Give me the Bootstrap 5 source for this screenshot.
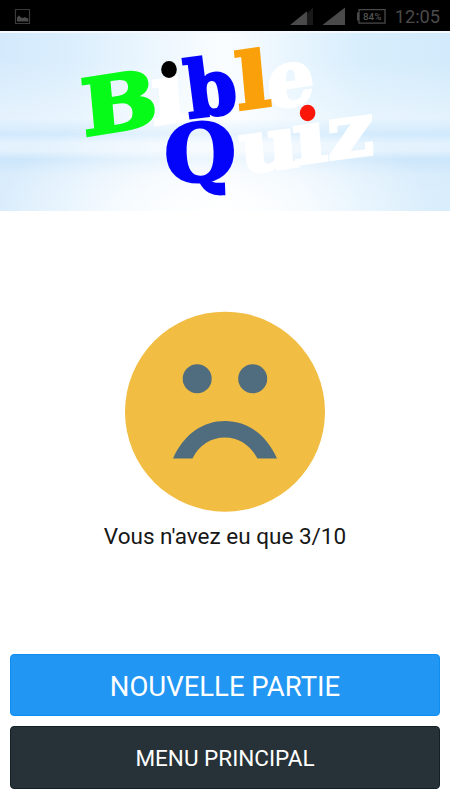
<!DOCTYPE html>
<html lang="fr">
<head>
<meta charset="utf-8">
<meta name="viewport" content="width=device-width, initial-scale=1">
<title>Bible Quiz</title>
<link rel="stylesheet" href="https://cdn.jsdelivr.net/npm/bootstrap@5.3.0/dist/css/bootstrap.min.css">
<style>
body{font-family:Roboto,"Liberation Sans",sans-serif;color:#171717}
.status-bar{height:31px;background:#000;color:#4a4a4a;padding:2px 10px 0 14px}
.clock{font-size:18.2px;line-height:28px}
.banner{height:180px;border-top:2px solid #f4f8ff;
background:
 radial-gradient(ellipse 215px 110px at 48% 100%,rgba(255,255,255,.9) 0,rgba(255,255,255,.6) 45%,rgba(255,255,255,0) 100%),
 linear-gradient(180deg,rgba(205,230,251,0) 48%,rgba(198,228,252,.6) 57%,rgba(228,242,254,.4) 62%,rgba(228,242,254,.4) 66%,rgba(196,226,250,.7) 71%,rgba(205,230,251,.3) 80%,rgba(255,255,255,0) 100%),
 linear-gradient(180deg,rgba(255,255,255,0) 15%,rgba(255,255,255,.4) 48%,rgba(255,255,255,.15) 100%),
 linear-gradient(90deg,#d4eafc 0,#daeefd 15%,#edf7fe 35%,#fafdff 50%,#e8f5fe 65%,#d8eefd 80%,#d2eafb 100%)}
.logo{font:700 100px "DejaVu Serif","Liberation Serif",serif}
.logo text{stroke-width:4px;stroke-linejoin:miter}
.face{margin-top:100px}
.result{font-size:22.5px;line-height:30px;margin-top:8.500px}
.actions{padding:0 10px 11.500px;gap:10px}
.action{height:62.500px;border-radius:4px;padding:0;color:#fff}
.action-new,.action-new:hover{background:#2196f3;border:1px solid #0d8df1;color:#fff;font-size:27.5px;padding-top:3px}
.action-menu,.action-menu:hover{background:#263238;border:1px solid #132027;color:#fff;font-size:22.5px;padding-top:3px}
</style>
<script src="https://cdn.jsdelivr.net/npm/bootstrap@5.3.0/dist/js/bootstrap.bundle.min.js"></script>
</head>
<body class="bg-white overflow-hidden">
<div class="d-flex flex-column vh-100">
  <div class="status-bar d-flex justify-content-between align-items-center flex-shrink-0">
    <svg width="17" height="17" viewBox="0 0 17 17"><path d="M1.5 1.5h14v14h-14z" fill="none" stroke="#3a3a3a" stroke-width="1.2"/><path d="M3 13.5V9.6l1-1 1-1.3 1.5 1.7 1 1 1.2-.6 1 .6 1-1 1 .6 1 .5 1.6.3v3.1z" fill="#4a4a4a"/></svg>
    <div class="d-flex align-items-center">
      <svg width="100" height="20" viewBox="0 0 100 20">
        <path d="M26 .5V18h-6V6.200z" fill="#191919"/><path d="M20 4.200V18H3z" fill="#4a4a4a"/>
        <path d="M58 .5V18H35.500z" fill="#4a4a4a"/>
        <path d="M72 2.600h26v13.500H72z" fill="none" stroke="#4a4a4a" stroke-width="1.300"/><path d="M70 5.500h2v8h-2z" fill="#4a4a4a"/>
        <text x="85.200" y="13" text-anchor="middle" font-family="Roboto,sans-serif" font-size="9.800" font-weight="500" fill="#555">84%</text>
      </svg>
      <span class="clock ms-2">12:05</span>
    </div>
  </div>
  <header class="banner flex-shrink-0">
    <svg class="logo d-block" width="450" height="178" viewBox="0 33 450 178" role="img" aria-label="Bible Quiz">
      <g fill="#fff" stroke="#fff">
        <text transform="matrix(.9 -.14 .05 .83 153 125)">ı</text>
        <text transform="matrix(.74 -.11 .03 .78 268 109)">e</text>
        <text transform="matrix(.82 -.11 .06 .72 241 174)">u</text>
        <text transform="matrix(.92 -.13 .05 .72 294 165)">ı</text>
        <text transform="matrix(.82 -.11 .03 .74 328 160)">z</text>
      </g>
      <text transform="matrix(.89 -.14 .07 .77 84 136)" fill="#06fc18" stroke="#06fc18">B</text>
      <text transform="matrix(.72 -.09 .1 .77 189 118)" fill="#0404fb" stroke="#0404fb">b</text>
      <text transform="matrix(.9 -.13 .07 .76 238 110)" fill="#faa00a" stroke="#faa00a">l</text>
      <text transform="matrix(.82 -.05 .03 .79 165.500 183)" fill="#0404fb" stroke="#0404fb">Q</text>
      <ellipse cx="169" cy="69.500" rx="7.800" ry="8.500"/>
      <ellipse cx="307.600" cy="113" rx="7.800" ry="8.200" fill="#fb160a"/>
    </svg>
  </header>
  <main class="flex-grow-1 text-center">
    <svg class="face d-block mx-auto" width="200" height="201" viewBox="125 311 200 201">
      <ellipse cx="225" cy="411.700" rx="100" ry="100" fill="#f1bd42"/>
      <g fill="#506d7f"><circle cx="197.200" cy="378.800" r="14.500"/><circle cx="252.700" cy="378.800" r="14.500"/>
      <path d="M173 458.500C184 434 203 421 225 421s41 13 52 37.500h-19.500C250 445 239 437.500 225 437.500s-26 7.500-32.500 21z"/></g>
    </svg>
    <p class="result mb-0">Vous n'avez eu que 3/10</p>
  </main>
  <div class="actions d-grid flex-shrink-0">
    <button type="button" class="btn action action-new">NOUVELLE PARTIE</button>
    <button type="button" class="btn action action-menu">MENU PRINCIPAL</button>
  </div>
</div>
</body>
</html>
